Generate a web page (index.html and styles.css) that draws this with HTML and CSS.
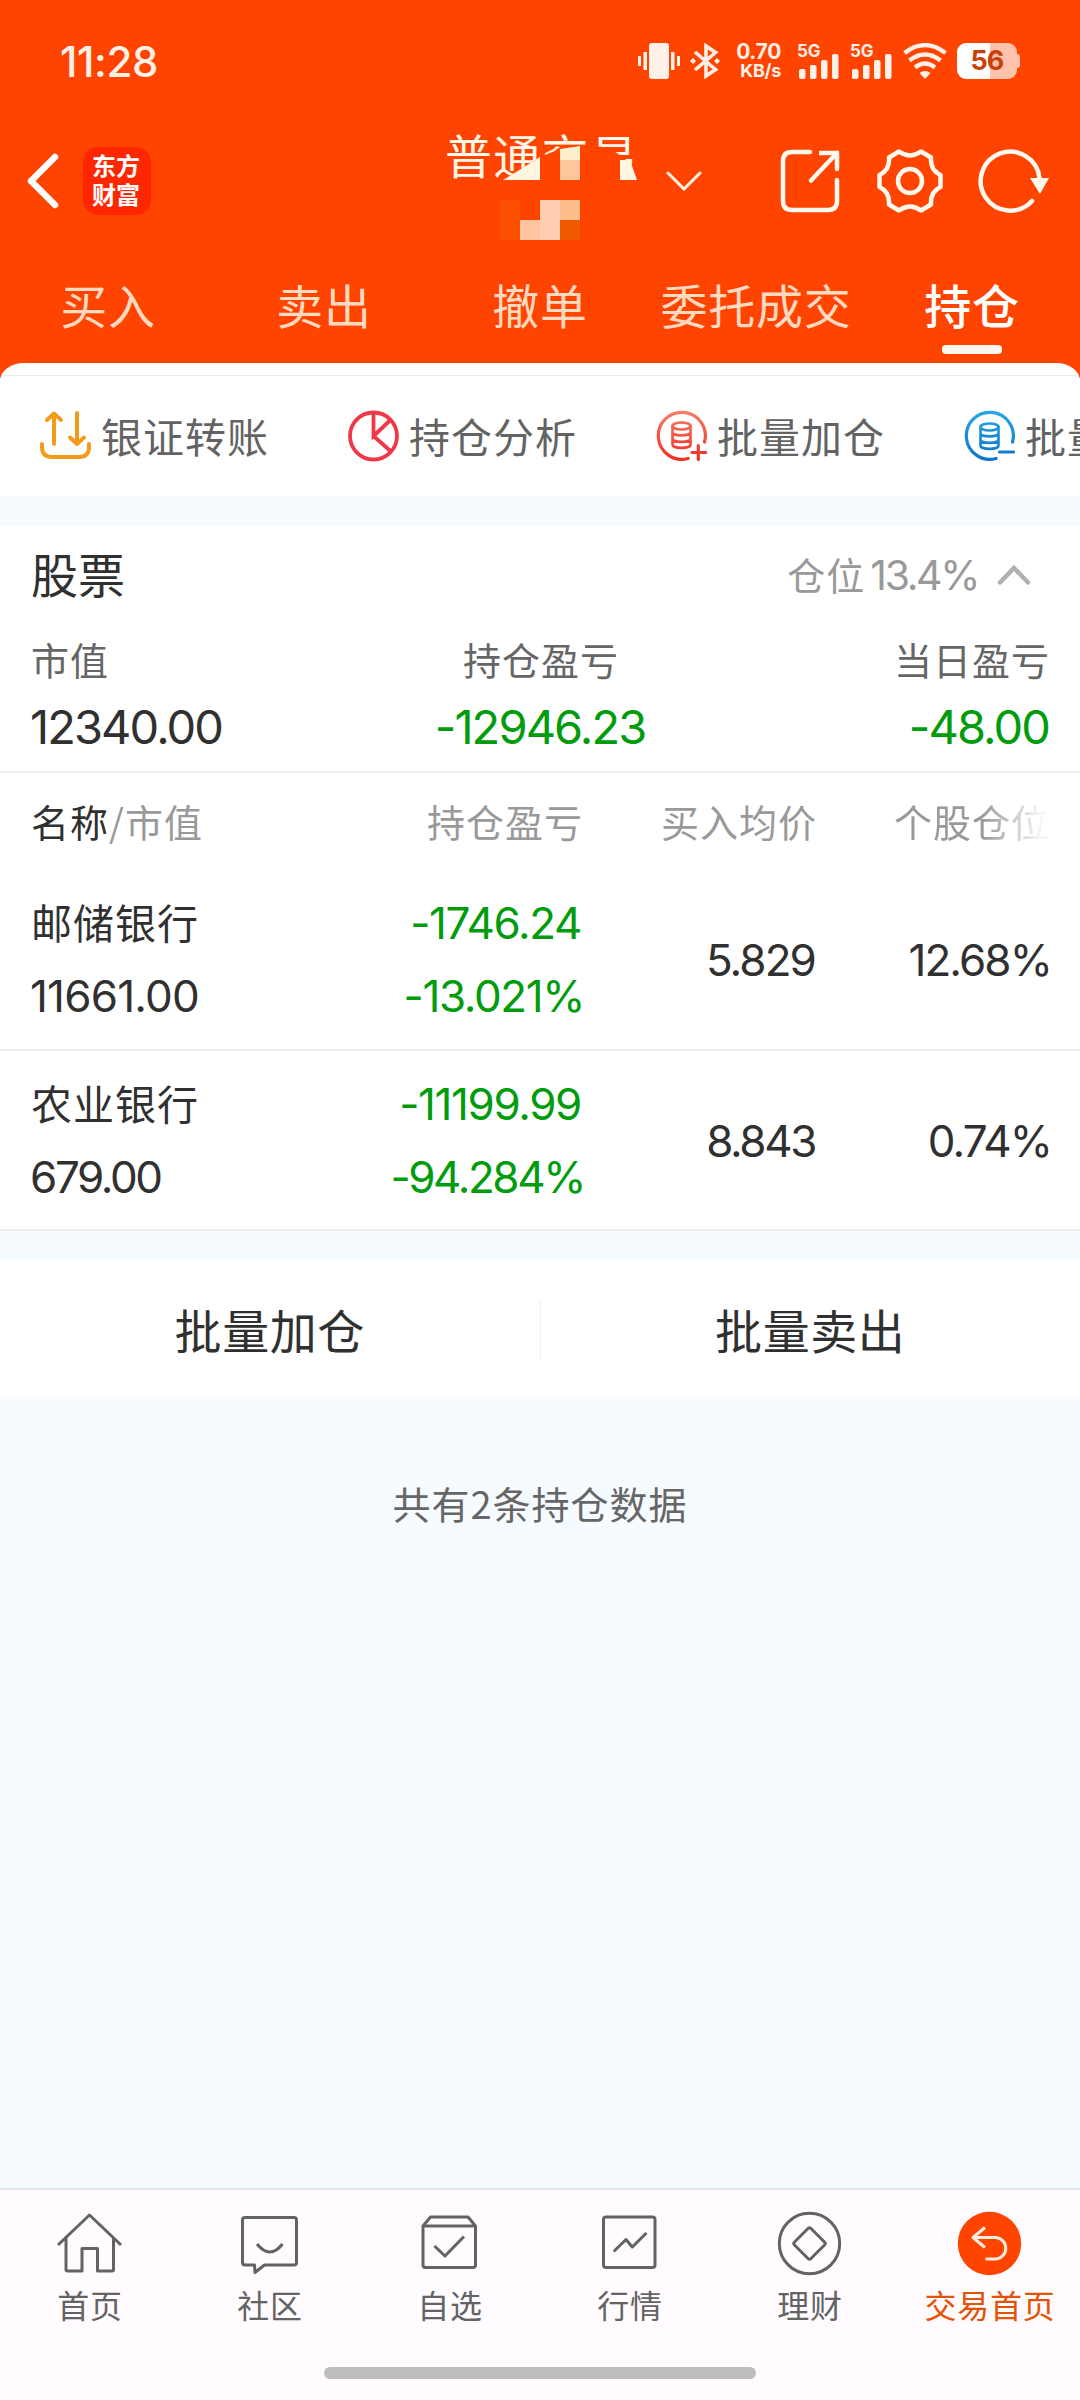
FILE: index.html
```html
<!DOCTYPE html>
<html lang="zh-CN">
<head>
<meta charset="utf-8">
<title>持仓</title>
<link rel="stylesheet" href="styles.css">
</head>
<body>
<div class="app">
  <header class="header">
    <div class="status">
      <span class="clock num">11:28</span>
      <svg class="vibrate" width="42" height="36" viewBox="0 0 42 36" fill="#fff0e8"><rect x="11" width="20" height="36" rx="3"/><rect x="5.500" y="9" width="3.500" height="18"/><rect y="13" width="3" height="10"/><rect x="33" y="9" width="3.500" height="18"/><rect x="39" y="13" width="3" height="10"/></svg>
      <svg class="bluetooth" width="30" height="36" viewBox="0 0 30 36" fill="none" stroke="#fff0e8" stroke-width="3.600"><path d="M5 9 25.500 26.500 16 33V3L25.500 9.500 5 27"/><path d="M3 15 6 18 3 21 0 18ZM27 15 30 18 27 21 24 18Z" fill="#fff0e8" stroke="none"/></svg>
      <div class="speed num"><span>0.70</span><small>KB/s</small></div>
      <div class="signal"><span class="net num">5G</span><svg width="43" height="36" viewBox="0 0 43 36" fill="#fff0e8"><rect x="2" y="26" width="6.500" height="10" rx="2"/><rect x="13" y="22" width="6.500" height="14" rx="2"/><rect x="24" y="17" width="6.500" height="19" rx="2"/><rect x="35" y="11" width="6.500" height="25" rx="2"/></svg></div>
      <div class="signal second"><span class="net num">5G</span><svg width="43" height="36" viewBox="0 0 43 36" fill="#fff0e8"><rect x="2" y="26" width="6.500" height="10" rx="2"/><rect x="13" y="22" width="6.500" height="14" rx="2"/><rect x="24" y="17" width="6.500" height="19" rx="2"/><rect x="35" y="11" width="6.500" height="25" rx="2"/></svg></div>
      <svg class="wifi" width="44" height="36" viewBox="0 0 44 36" fill="none" stroke="#fff0e8" stroke-width="4.200"><path d="M1.500 10Q22-6 42.500 10M6.500 17.500Q22 5.500 37.500 17.500M12 24.500Q22 16.500 32 24.500"/><path d="M16.500 30Q22 26 27.500 30L22 36Z" fill="#fff0e8" stroke="none"/></svg>
      <div class="battery num">56</div>
    </div>
    <div class="bar">
      <svg class="back" width="34" height="60" viewBox="0 0 34 60" fill="none" stroke="#fff" stroke-width="6.500" stroke-linecap="round" stroke-linejoin="round"><path d="M29 6 5 30 29 54"/></svg>
      <div class="logo"><span>东方</span><span>财富</span></div>
      <div class="account">
        <span class="account-name">普通交易</span>
        <svg class="mosaic" width="200" height="120" viewBox="0 0 200 120"><path d="M56 58 93 35Q112 23 133 23 163 22 179 38L184 43 190 58V66H56Z" fill="#ff4400"/><path d="M56 58 93 35V58Z" fill="#fff5e0"/><path d="M98 31 111 25 108 29 98 33Z" fill="#fff0d5"/><path d="M113 27 133 24V38H113Z" fill="#ffeecb"/><path d="M113 38h20v20h-20Z" fill="#ffc59b"/><path d="M173 38h10L190 58H173Z" fill="#fff5e3"/><path d="M53 78h20v40H53Z" fill="#fb5000"/><path d="M73 98h20v20H73Z" fill="#ffc5a0"/><path d="M93 78h20v40H93Z" fill="#ffceb0"/><path d="M113 78h20v20h-20Z" fill="#ffbd8a"/><path d="M113 98h20v20h-20Z" fill="#f25800"/></svg>
      </div>
      <svg class="drop" width="38" height="20" viewBox="0 0 38 20" fill="none" stroke="#fff5e8" stroke-width="3" stroke-linecap="round"><path d="M3 2 19 18 35 2"/></svg>
      <svg class="share" width="60" height="64" viewBox="0 0 60 64" fill="none" stroke="#fff8ee" stroke-width="4.500"><path stroke-linecap="round" d="M30 3H12Q3 3 3 12V52Q3 61 12 61H48Q57 61 57 52V31M57 20V4M56 5 31 31.500"/><path d="M39 4H59" /></svg>
      <svg class="gear" width="66" height="64" viewBox="0 0 66 64" fill="none" stroke="#fff8ee" stroke-width="4.500" stroke-linejoin="round"><circle cx="33" cy="32" r="12"/><path d="M22 2.500Q33 10.500 44 2.500L54 8.500Q53 21 63.500 26V38Q53 43 54 55.500L44 61.500Q33 53.500 22 61.500L12 55.500Q13 43 2.500 38V26Q13 21 12 8.500Z"/></svg>
      <svg class="refresh" width="72" height="64" viewBox="0 0 72 64" fill="none" stroke="#fff8ee" stroke-width="4.500" stroke-linecap="round"><path d="M61.500 29A29.500 29.500 0 1 0 54 52"/><path d="M52 29H71L62 45Z" fill="#fff8ee" stroke="none"/></svg>
    </div>
    <nav class="tabs"><span>买入</span><span>卖出</span><span>撤单</span><span>委托成交</span><span class="on">持仓</span></nav>
  </header>

  <section class="quick">
    <div class="quick-item"><svg width="51" height="52" viewBox="0 0 51 52" fill="none" stroke="#f39b1a" stroke-width="4" stroke-linecap="round" stroke-linejoin="round"><path d="M2 34V37Q2 47 12 47H39Q49 47 49 37V34M14 34V4M7 10 14 3.500 21 10M37 3V34M30 27.500 37 34 44 27.500"/></svg><span>银证转账</span></div>
    <div class="quick-item"><svg width="51" height="52" viewBox="0 0 51 52" fill="none" stroke="#f03848" stroke-width="3.800"><circle cx="25.500" cy="26" r="23.500"/><path d="M25.500 3V26L42.500 10M25.500 26 43 41.500"/></svg><span>持仓分析</span></div>
    <div class="quick-item"><svg width="51" height="52" viewBox="0 0 51 52" fill="none" stroke="url(#red)" stroke-width="3.200" stroke-linecap="round"><defs><linearGradient id="red" gradientUnits="userSpaceOnUse" x1="0" y1="0" x2="0" y2="52"><stop stop-color="#f58068"/><stop offset="1" stop-color="#f02a20"/></linearGradient></defs><path d="M48.500 32A23.500 23.500 0 1 0 32 48.500"/><path stroke-width="2.600" d="M16.500 16V34.500C16.500 39 34.500 39 34.500 34.500V16M16.500 22C16.500 26.500 34.500 26.500 34.500 22M16.500 28.500C16.500 33 34.500 33 34.500 28.500"/><ellipse cx="25.500" cy="16" rx="9" ry="3.500" stroke-width="2.600"/><path d="M36 42.500H49.500M42.300 35.500V49.500"/></svg><span>批量加仓</span></div>
    <div class="quick-item"><svg width="51" height="52" viewBox="0 0 51 52" fill="none" stroke="url(#blue)" stroke-width="3.200" stroke-linecap="round"><defs><linearGradient id="blue" gradientUnits="userSpaceOnUse" x1="0" y1="0" x2="0" y2="52"><stop stop-color="#28a8e4"/><stop offset="1" stop-color="#0a72cc"/></linearGradient></defs><path d="M48.500 32A23.500 23.500 0 1 0 32 48.500"/><path stroke-width="2.600" d="M16.500 17V35.500C16.500 40 34.500 40 34.500 35.500V17M16.500 23C16.500 27.500 34.500 27.500 34.500 23M16.500 29.500C16.500 34 34.500 34 34.500 29.500"/><ellipse cx="25.500" cy="17" rx="9" ry="3.500" stroke-width="2.600"/><path d="M35.500 42H49.500"/></svg><span>批量卖出</span></div>
  </section>

  <section class="card">
    <div class="card-head"><h2>股票</h2><div class="ratio"><span>仓位</span><span class="num tight">13.4%</span><svg width="34" height="22" viewBox="0 0 34 22" fill="none" stroke="#b0b0b0" stroke-width="4.500" stroke-linecap="round"><path d="M3 18.500 17 4 31 18.500"/></svg></div></div>
    <div class="summary">
      <div class="sum"><span>市值</span><b class="num">12340.00</b></div>
      <div class="sum mid"><span>持仓盈亏</span><b class="num down">-12946.23</b></div>
      <div class="sum end"><span>当日盈亏</span><b class="num down">-48.00</b></div>
    </div>
    <div class="grid thead"><span class="first"><em>名称</em>/市值</span><span>持仓盈亏</span><span>买入均价</span><span class="fade">个股仓位</span></div>
    <div class="grid row">
      <div class="cell first"><span class="name">邮储银行</span><span class="num wide">11661.00</span></div>
      <div class="cell down"><span class="num loose">-1746.24</span><span class="num loose pct">-13.021%</span></div>
      <span class="num">5.829</span><span class="num pct">12.68%</span>
    </div>
    <div class="grid row">
      <div class="cell first"><span class="name">农业银行</span><span class="num tight">679.00</span></div>
      <div class="cell down"><span class="num loose">-11199.99</span><span class="num tight pct">-94.284%</span></div>
      <span class="num tight">8.843</span><span class="num pct">0.74%</span>
    </div>
  </section>

  <section class="actions"><span>批量加仓</span><i></i><span>批量卖出</span></section>
  <p class="total">共有2条持仓数据</p>

  <footer class="nav">
    <div class="nav-items">
      <div class="nav-item"><svg width="72" height="72" viewBox="0 0 72 72"><path d="M4 38 35.500 8 67 38M12 31V62.500Q12 64 13.500 64H28V41.500H43.500V64H58Q59.500 64 59.500 62.500V31"/></svg>首页</div>
      <div class="nav-item"><svg width="72" height="72" viewBox="0 0 72 72"><path d="M11 10.500H60Q62.500 10.500 62.500 13V55.500Q62.500 58 60 58H30.500L21 65.500 20.500 58H11Q8.500 58 8.500 55.500V13Q8.500 10.500 11 10.500ZM23 37Q36 53 48.500 37"/></svg>社区</div>
      <div class="nav-item"><svg width="72" height="72" viewBox="0 0 72 72"><path d="M9 19 16.500 10H54L61.500 19V58Q61.500 60.500 59 60.500H11.500Q9 60.500 9 58ZM9 19H61.500M20.500 39 31 49 50 29.500"/></svg>自选</div>
      <div class="nav-item"><svg width="72" height="72" viewBox="0 0 72 72"><rect x="9.500" y="10" width="51.500" height="50.500" rx="2.500"/><path d="M19.700 44.500 32 32.500 38.300 40 52.400 26"/></svg>行情</div>
      <div class="nav-item"><svg width="72" height="72" viewBox="0 0 72 72"><circle cx="35.500" cy="36.500" r="30.200"/><path d="M34 21.500Q35.500 20 37 21.500L50.500 35Q52 36.500 50.500 38L37 51.500Q35.500 53 34 51.500L20.500 38Q19 36.500 20.500 35Z"/></svg>理财</div>
      <div class="nav-item on"><svg width="72" height="72" viewBox="0 0 72 72"><circle cx="35.500" cy="36.500" r="31.700" fill="#ff4400" stroke="none"/><path d="M31 20.500 19 30.500 31 40.500M19 30.500H42A10.800 10.800 0 0 1 42 52H31.500" stroke="#ffeedd"/></svg>交易首页</div>
    </div>
    <div class="home-bar"></div>
  </footer>
</div>
</body>
</html>
```
FILE: styles.css
```css
* { box-sizing: border-box; }
body { margin: 0; font-family: "Noto Sans CJK SC", sans-serif; color: #303030; }
svg { display: block; flex: none; }
.num { font-family: Inter, "Noto Sans CJK SC", sans-serif; }
.app { width: 1080px; height: 2400px; background: #f5fbff; display: flex; flex-direction: column; overflow: hidden; }

/* Orange header: status bar, title bar, tabs */
.header { background: #ff4400; height: 378px; flex: none; }
.status { height: 122px; padding-left: 60px; display: flex; align-items: center; color: #fff0e8; }
.clock { font-size: 42px; font-weight: 550; letter-spacing: -.4px; width: 578px; }
.bluetooth { margin-left: 10px; }
.speed { width: 46px; margin-left: 15px; display: flex; flex-direction: column; align-items: flex-end; font-size: 21px; line-height: 19px; font-weight: 650; letter-spacing: -.3px; padding-top: 1px; }
.speed small { font-size: 18px; line-height: 20px; }
.signal { position: relative; margin-left: 16px; }
.signal.second { margin-left: 10px; }
.net { position: absolute; left: 0; top: -2px; font-size: 17px; line-height: 20px; font-weight: 650; }
.wifi { margin-left: 10px; }
.battery { position: relative; width: 60px; height: 36px; margin-left: 10px; border-radius: 9px; background: linear-gradient(90deg, #fff 33px, #ffc3ad 33px); color: #c8400c; font-size: 27px; font-weight: 650; letter-spacing: -.8px; line-height: 36px; text-align: center; }
.battery::after { content: ""; position: absolute; left: 60px; top: 11px; width: 3px; height: 14px; background: #ffc3ad; border-radius: 0 3px 3px 0; }
.bar { height: 118px; padding-left: 26px; display: flex; align-items: center; }
.logo { width: 68px; height: 68px; margin-left: 23px; border-radius: 15px; background: #ff2600; color: #fff; font-size: 24px; line-height: 29px; font-weight: 700; display: flex; flex-direction: column; align-items: center; justify-content: center; padding: 0 2px 4px 0; }
.account { position: relative; width: 200px; height: 118px; margin-left: 296px; }
.account-name { display: block; margin: -2px 0 0 -2px; font-size: 47px; letter-spacing: 1.300px; line-height: 68px; color: #fff8ea; white-space: nowrap; }
.mosaic { position: absolute; left: 0; top: 0; }
.drop { margin-left: 18px; }
.share { margin-left: 77px; }
.gear { margin-left: 37px; }
.refresh { margin-left: 35px; }
.tabs { display: flex; height: 123px; }
.tabs span { flex: 1; display: flex; flex-direction: column; align-items: center; font-size: 47px; letter-spacing: .8px; line-height: 70px; padding-top: 29px; color: #ffd9c0; }
.tabs .on { color: #fff; font-weight: 500; }
.tabs .on::after { content: ""; width: 60px; height: 9px; margin-top: 6px; border-radius: 4px; background: #fff8f0; }

/* Shortcut strip */
.quick { flex: none; height: 133px; margin-top: -15px; border-radius: 24px 24px 0 0 / 18px 18px 0 0; display: flex; align-items: center; overflow: hidden; padding-top: 12px; background: #fff linear-gradient(#ebebeb, #ebebeb) 0 12px / 100% 1px no-repeat; }
.quick-item { flex: none; width: 308px; padding-left: 40px; display: flex; align-items: center; gap: 10px; font-size: 41px; letter-spacing: 1px; line-height: 60px; color: #636363; white-space: nowrap; }
.quick-item span { padding-bottom: 2px; }

/* Holdings */
.card { flex: none; margin-top: 30px; background: #fff; height: 705px; border-bottom: 2px solid #eee; }
.card-head { height: 98px; padding: 0 32px 0 31px; display: flex; justify-content: space-between; align-items: center; }
h2 { margin: 0; padding-bottom: 4px; font-size: 47px; font-weight: 400; line-height: 68px; }
.ratio { display: flex; align-items: center; font-size: 38px; letter-spacing: 1px; color: #999; padding-right: 17px; }
.ratio span:first-child { padding-bottom: 3px; }
.ratio .num { margin-left: 5px; font-size: 41px; }
.ratio svg { margin-left: 19px; }
.summary { height: 149px; padding: 7px 31px 0 31px; display: grid; grid-template-columns: 1fr 1fr 1fr; border-bottom: 2px solid #eee; }
.sum { display: flex; flex-direction: column; font-size: 38px; letter-spacing: 1px; line-height: 56px; color: #666; }
.sum b { font-size: 47px; font-weight: 400; line-height: 79px; color: #303030; }
.sum:first-child b { margin-left: -1px; }
.mid { align-items: center; }
.mid span { margin-left: 2px; }
.end { align-items: flex-end; }
.end span { margin-right: -1px; }
.sum .down, .down { color: #009c0c; }
.grid { display: grid; grid-template-columns: 249px 301px 234px 233px; padding: 0 30px 0 31px; align-items: center; text-align: right; }
.first { text-align: left; }
.thead { height: 97px; padding-bottom: 3px; font-size: 38px; letter-spacing: 1px; color: #999; }
.thead span:not(.first) { margin-right: -2px; }
.thead em { font-style: normal; color: #303030; }
.fade { mask-image: linear-gradient(90deg, #000 167px, rgba(0,0,0,.1) 225px); }
.row { height: 179px; padding-top: 1px; font-size: 44px; }
.row + .row { height: 181px; border-top: 2px solid #eee; }
.cell { display: flex; flex-direction: column; line-height: 73px; }
.name { margin: -2px 0 2px; font-size: 41px; letter-spacing: 1px; }
.card .num { letter-spacing: -1.9px; }
.card .tight { letter-spacing: -2.4px; }
.card .loose { letter-spacing: -1.4px; }
.card .wide { letter-spacing: -.8px; }
.pct { margin-right: -3px; }
.cell.first .num { margin-left: -1px; }

.actions { flex: none; margin-top: 29px; height: 139px; background: #fff; display: flex; align-items: center; }
.actions span { flex: 1; text-align: center; font-size: 47px; letter-spacing: .6px; padding-bottom: 2px; }
.actions i { width: 1px; height: 60px; background: #eee; }
.total { margin: 75px 0 0; text-align: center; font-size: 38px; letter-spacing: 1px; line-height: 58px; color: #666; }

/* Bottom navigation */
.nav { margin-top: auto; height: 212px; flex: none; background: #fffbff; border-top: 2px solid #e3e6e6; }
.nav-items { display: flex; padding-top: 17px; height: 177px; }
.nav-item { flex: 1; display: flex; flex-direction: column; align-items: center; font-size: 32px; letter-spacing: .8px; line-height: 51px; color: #636363; }
.nav-item svg { fill: none; stroke: #636363; stroke-width: 3; stroke-linejoin: round; }
.nav-item.on { color: #e35205; }
.home-bar { width: 432px; height: 12px; margin: 0 auto; border-radius: 6px; background: #bdbdbd; }
```
